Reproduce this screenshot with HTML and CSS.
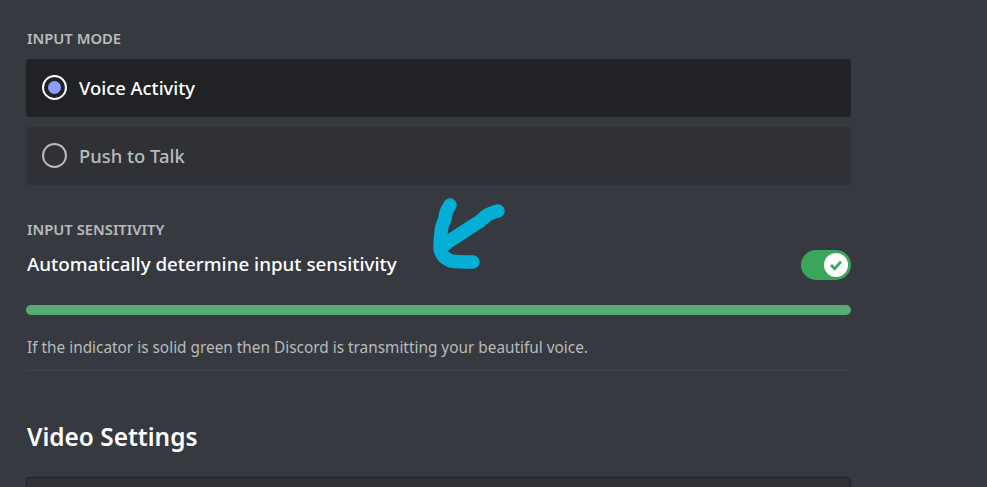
FILE: index.html
```html
<!DOCTYPE html>
<html lang="en">
<head>
    <meta charset="UTF-8">
    <title>Voice Settings</title>
    <link rel="stylesheet" href="styles.css">
</head>
<body>

<div class="content">
    <h5 class="label mode-label">INPUT MODE</h5>
    <div class="radio-row selected">
        <span class="radio"><span class="radio-dot"></span></span>
        <span>Voice Activity</span>
    </div>
    <div class="radio-row">
        <span class="radio"></span>
        <span>Push to Talk</span>
    </div>

    <h5 class="label sensitivity-label">INPUT SENSITIVITY</h5>
    <div class="auto-row">
        <span class="auto-text">Automatically determine input sensitivity</span>
        <div class="switch">
            <span class="knob">
                <svg width="16" height="16" viewBox="0 0 16 16">
                    <path d="M3 8 L6.6 11.6 L13 4.6" fill="none" stroke="#3ba55d" stroke-width="2.8"/>
                </svg>
            </span>
        </div>
    </div>
    <div class="meter"></div>
    <p class="note">If the indicator is solid green then Discord is transmitting your beautiful voice.</p>
    <div class="divider"></div>

    <h2>Video Settings</h2>
    <div class="video-box"></div>
</div>

<!-- hand drawn arrow on top of the screenshot -->
<svg class="scribble" width="90" height="80" viewBox="0 0 90 80">
    <path d="M28 10 C24 16 23 20 23 24 C20 30 19 34 19 38 C18 44 18 48 18 53 C19 60 22 63 29 66 C36 67 44 67 51 67" fill="none" stroke="#05aed5" stroke-width="13.5" stroke-linecap="round" stroke-linejoin="round"/>
    <path d="M20 52 L26 47 L52 30 C58 27 61 24 64 21 C68 18 72 17 76 16" fill="none" stroke="#05aed5" stroke-width="13.5" stroke-linecap="round" stroke-linejoin="round"/>
</svg>

</body>
</html>
```

FILE: styles.css
```css
html, body {
    margin: 0;
    height: 100%;
    overflow: hidden;
}
body {
    background-color: #36393f;
    font-family: "Noto Sans", sans-serif;
    color: #fff;
}
.content {
    width: 825px;
    padding-left: 26px;
    height: 487px;
    overflow: hidden;
}
.label {
    margin: 0;
    font-size: 14.8px;
    line-height: 16px;
    font-weight: 600;
    color: #b9bbbe;
    padding-left: 1px;
}
.mode-label {
    padding-top: 30px;
    margin-bottom: 13px;
}
.sensitivity-label {
    margin-top: 36px;
    margin-bottom: 13px;
}
.radio-row {
    display: flex;
    align-items: center;
    gap: 12px;
    height: 58px;
    padding-left: 16px;
    padding-bottom: 2px;
    box-sizing: border-box;
    margin-bottom: 10px;
    background-color: #2f3136;
    border-radius: 3px;
    font-size: 18.4px;
    font-weight: 500;
    color: #b9bbbe;
}
.radio-row.selected {
    background-color: #202225;
    color: #fff;
}
.radio {
    display: flex;
    align-items: center;
    justify-content: center;
    box-sizing: border-box;
    width: 25px;
    height: 25px;
    border: 2px solid #b9bbbe;
    border-radius: 50%;
}
.selected .radio {
    border-color: #fff;
}
.radio-dot {
    width: 13px;
    height: 13px;
    border-radius: 50%;
    background-color: #8e9bff;
}
.auto-row {
    display: flex;
    align-items: center;
    justify-content: space-between;
    height: 30px;
    padding-left: 1px;
    font-size: 18.8px;
    font-weight: 500;
}
.auto-text {
    padding-bottom: 2px;
}
.switch {
    display: flex;
    justify-content: flex-end;
    align-items: center;
    box-sizing: border-box;
    width: 50px;
    height: 30px;
    padding-right: 3px;
    background-color: #3ba55d;
    border-radius: 15px;
}
.knob {
    display: flex;
    align-items: center;
    justify-content: center;
    width: 24px;
    height: 24px;
    background-color: #fff;
    border-radius: 50%;
}
.meter {
    height: 10px;
    margin-top: 25px;
    background-color: #57ab74;
    border-radius: 5px;
}
.note {
    margin: 23px 0 0;
    padding-left: 1px;
    font-size: 15.36px;
    line-height: 20px;
    color: #b9bbbe;
}
.divider {
    height: 1px;
    margin-top: 12px;
    background-color: #42454a;
}
h2 {
    margin: 51px 0 0;
    padding-left: 1px;
    font-size: 24.4px;
    line-height: 30px;
    font-weight: 600;
}
.video-box {
    height: 60px;
    margin-top: 25px;
    background-color: #2f3136;
    border: 1px solid #202225;
    border-radius: 3px;
    box-sizing: border-box;
}
.scribble {
    position: absolute;
    left: 422px;
    top: 195px;
}
```
